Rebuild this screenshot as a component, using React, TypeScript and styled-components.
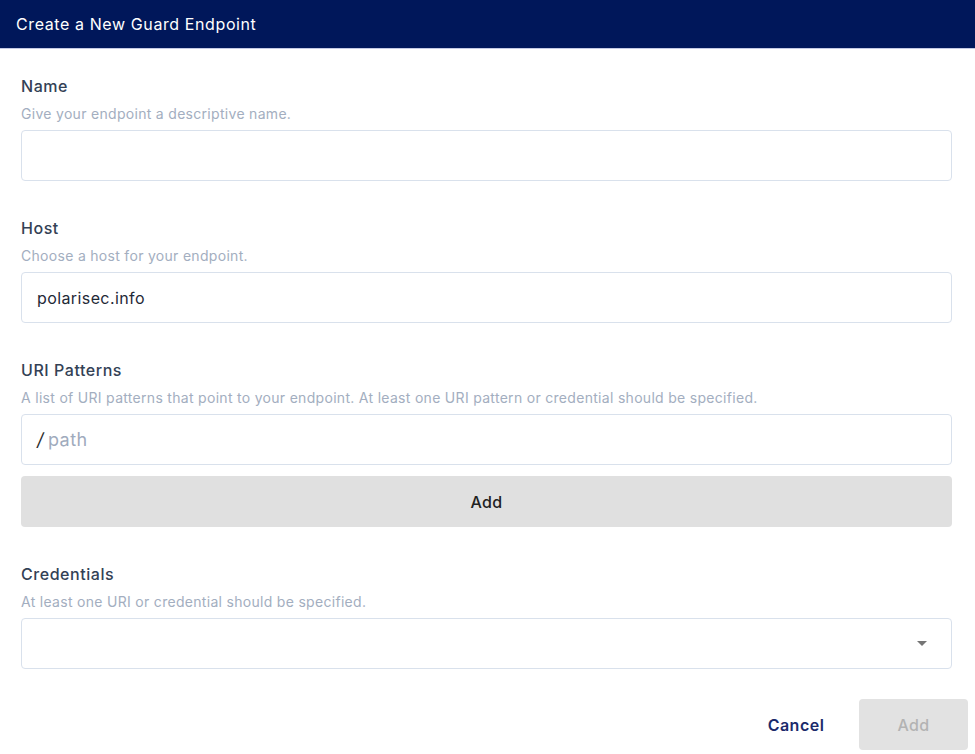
import React from "react";
import styled, { createGlobalStyle } from "styled-components";

const Global = createGlobalStyle`
  * { box-sizing: border-box; }
  body {
    margin: 0;
    background: #ffffff;
    font-family: Inter, "Noto Sans", "Liberation Sans", sans-serif;
  }
`;

const Page = styled.div`
  width: 975px;
  height: 754px;
  display: flex;
  flex-direction: column;
  background: #fff;
  overflow: hidden;
`;

const Header = styled.header`
  height: 49px;
  flex: none;
  background: #00175a;
  border-bottom: 1px solid #c3c9e4;
  display: flex;
  align-items: center;
  padding: 0 16px 1px;
  color: #ffffff;
  font-size: 16px;
  letter-spacing: 0.6px;
  font-weight: 400;
`;

const Body = styled.div`
  display: flex;
  flex-direction: column;
  padding: 27px 23px 0 21px;
  gap: 37px;
`;

const Section = styled.section`
  display: flex;
  flex-direction: column;
`;

const Label = styled.div`
  font-size: 16px;
  line-height: 20px;
  letter-spacing: 0.55px;
  font-weight: 500;
  color: #334155;
`;

const Description = styled.div`
  margin-top: 8px;
  font-size: 14px;
  line-height: 20px;
  letter-spacing: 0.3px;
  color: #a3aec0;
`;

const Field = styled.div`
  margin-top: 6px;
  height: 51px;
  border: 1px solid #d9e1ec;
  border-radius: 4px;
  display: flex;
  align-items: center;
  padding: 0 16px 0 15px;
  font-size: 16px;
  letter-spacing: 0.4px;
  color: #1f2937;
  position: relative;
`;

const Slash = styled.span`
  font-size: 18px;
  color: #2b2b2b;
  margin-right: 4px;
  font-style: italic;
`;

const Placeholder = styled.span`
  font-size: 18px;
  letter-spacing: 0.5px;
  color: #9fabbd;
`;

const WideButton = styled.button`
  margin-top: 11px;
  height: 51px;
  border: none;
  border-radius: 4px;
  background: #e0e0e0;
  color: #222;
  font-family: inherit;
  font-size: 16px;
  letter-spacing: 0.4px;
  font-weight: 500;
`;

const Caret = styled.svg`
  position: absolute;
  right: 24px;
  top: 22px;
`;

const Footer = styled.div`
  display: flex;
  justify-content: flex-end;
  align-items: center;
  padding: 30px 7px 0 0;
`;

const TextButton = styled.button`
  width: 92px;
  height: 51px;
  margin-right: 17px;
  background: transparent;
  border: none;
  color: #1b2a6b;
  font-family: inherit;
  font-size: 16px;
  letter-spacing: 0.5px;
  font-weight: 600;
`;

const DisabledButton = styled.button`
  width: 109px;
  height: 51px;
  border: none;
  border-radius: 4px;
  background: #e2e2e2;
  color: #b3b3b3;
  font-family: inherit;
  font-size: 16px;
  letter-spacing: 0.4px;
  font-weight: 500;
`;

export default function App() {
  return (
    <Page>
      <Global />
      <Header>Create a New Guard Endpoint</Header>
      <Body>
        <Section>
          <Label>Name</Label>
          <Description>Give your endpoint a descriptive name.</Description>
          <Field />
        </Section>
        <Section>
          <Label>Host</Label>
          <Description>Choose a host for your endpoint.</Description>
          <Field>polarisec.info</Field>
        </Section>
        <Section>
          <Label>URI Patterns</Label>
          <Description>
            A list of URI patterns that point to your endpoint. At least one URI pattern or credential should be specified.
          </Description>
          <Field>
            <Slash>/</Slash>
            <Placeholder>path</Placeholder>
          </Field>
          <WideButton>Add</WideButton>
        </Section>
        <Section>
          <Label>Credentials</Label>
          <Description>At least one URI or credential should be specified.</Description>
          <Field>
            <Caret width="10" height="5" viewBox="0 0 10 5">
              <path d="M0 0 L10 0 L5 5 Z" fill="#757575" />
            </Caret>
          </Field>
        </Section>
      </Body>
      <Footer>
        <TextButton>Cancel</TextButton>
        <DisabledButton disabled>Add</DisabledButton>
      </Footer>
    </Page>
  );
}
